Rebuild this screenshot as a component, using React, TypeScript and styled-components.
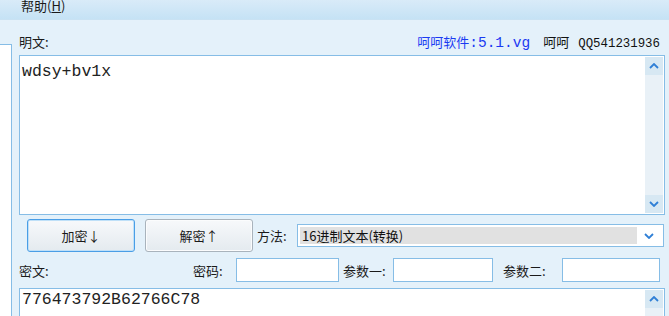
import React from 'react';
import styled, { createGlobalStyle } from 'styled-components';

const cjk = `"Noto Sans CJK SC", "Liberation Sans", sans-serif`;
const mono = `"Liberation Mono", "Noto Sans CJK SC", monospace`;
const line = '#86bde6';

const GlobalStyle = createGlobalStyle`
    html, body {
        margin: 0;
        padding: 0;
        background: #e4f1fa;
        overflow: hidden;
    }
    * { box-sizing: border-box; }
`;

const Window = styled.div`
    width: 669px;
    height: 316px;
    display: flex;
    flex-direction: column;
    overflow: hidden;
    font-family: ${cjk};
    font-size: 13px;
    color: #111;
`;

const MenuBar = styled.div`
    height: 20px;
    flex-shrink: 0;
    background: linear-gradient(#d9ebf8, #c5e2f5);
    border-bottom: 1px solid #c9e2f3;
    display: flex;
    align-items: flex-end;
    padding: 0 0 7px 21px;
    overflow: hidden;
`;

const MenuItem = styled.span`
    font-size: 13px;
    line-height: 13px;
    color: #1a1a1a;
`;

const Body = styled.div`
    flex: 1;
    display: flex;
    min-height: 0;
`;

const SidePanel = styled.div`
    width: 12px;
    margin-top: 24px;
    background: #fff;
    border-top: 1px solid ${line};
    border-right: 1px solid ${line};
    flex-shrink: 0;
`;

const Main = styled.div`
    flex: 1;
    display: flex;
    flex-direction: column;
    padding: 10px 4px 0 7px;
    min-width: 0;
    & > * {
        flex-shrink: 0;
    }
`;

const HeaderRow = styled.div`
    height: 25px;
    display: flex;
    align-items: center;
    justify-content: space-between;
    padding-bottom: 2px;
`;

const Label = styled.span<{ $w?: number }>`
    font-size: 13px;
    color: #1a1a1a;
    white-space: nowrap;
    ${p => (p.$w ? `width: ${p.$w}px; flex-shrink: 0;` : '')}
`;

const Info = styled.div`
    display: flex;
    align-items: center;
    padding-right: 5px;
    font-size: 13px;
`;

const Version = styled.span`
    color: #1a3af2;
    font-size: 13px;
    margin-right: 13px;
    & b {
        font-family: ${mono};
        font-weight: normal;
        font-size: 14.5px;
    }
`;

const Author = styled.span`
    color: #111;
    & b {
        font-family: ${mono};
        font-weight: normal;
        font-size: 12.4px;
        margin-left: 9px;
    }
`;

const TextBox = styled.div<{ $h: number }>`
    height: ${p => p.$h}px;
    background: #fff;
    border: 1px solid ${line};
    display: flex;
`;

const TextContent = styled.div<{ $pt: number }>`
    flex: 1;
    padding: ${p => p.$pt}px 2px;
    font-family: ${mono};
    font-size: 16.5px;
    line-height: 18px;
    color: #222;
`;

const ScrollBar = styled.div`
    width: 18px;
    margin: 1px 1px 1px 0;
    background: #e9f1f7;
    display: flex;
    flex-direction: column;
    justify-content: space-between;
`;

const ScrollBtn = styled.div`
    height: 18px;
    background: #d7e8f3;
    display: flex;
    align-items: center;
    justify-content: center;
`;

const Chevron = ({ up }: { up?: boolean }) => (
    <svg width="10" height="6" viewBox="0 0 10 6">
        <path
            d={up ? 'M1 5 L5 1 L9 5' : 'M1 1 L5 5 L9 1'}
            fill="none"
            stroke="#2f7fd6"
            strokeWidth="1.8"
        />
    </svg>
);

const ButtonRow = styled.div`
    height: 41px;
    display: flex;
    align-items: center;
    padding-left: 8px;
`;

const Button = styled.div<{ $focused?: boolean; $mr: number }>`
    width: 108px;
    height: 33px;
    margin-right: ${p => p.$mr}px;
    border-radius: 3px;
    border: 1px solid ${p => (p.$focused ? '#4a9ee6' : '#a9b3bc')};
    box-shadow: ${p => (p.$focused ? 'inset 0 0 0 1px #bfe0f8' : 'inset 0 0 0 1px #fbfcfd')};
    background: linear-gradient(#f7f9fb, #e4eaef);
    display: flex;
    align-items: center;
    justify-content: center;
    font-size: 13px;
    color: #1a1a1a;
    flex-shrink: 0;
`;

const Select = styled.div`
    flex: 1;
    height: 23px;
    margin-right: 1px;
    background: #fff;
    border: 1px solid ${line};
    display: flex;
    align-items: center;
    padding: 2px;
`;

const SelectValue = styled.div`
    flex: 1;
    height: 17px;
    background: #e1e1e1;
    font-size: 13px;
    line-height: 17px;
    padding-left: 2px;
    color: #111;
`;

const SelectArrow = styled.div`
    width: 24px;
    display: flex;
    justify-content: center;
`;

const ParamRow = styled.div`
    height: 32px;
    display: flex;
    align-items: center;
    padding-bottom: 4px;
    padding-right: 5px;
`;

const Input = styled.div<{ $w: number }>`
    width: ${p => p.$w}px;
    height: 24px;
    background: #fff;
    border: 1px solid ${line};
    flex-shrink: 0;
`;

const Spacer = styled.div`
    flex: 1;
`;

const Gap = styled.div<{ $w: number }>`
    width: ${p => p.$w}px;
    flex-shrink: 0;
`;

export default function App() {
    return (
        <Window>
            <GlobalStyle />
            <MenuBar>
                <MenuItem>帮助(<u>H</u>)</MenuItem>
            </MenuBar>
            <Body>
                <SidePanel />
                <Main>
                    <HeaderRow>
                        <Label>明文:</Label>
                        <Info>
                            <Version>呵呵软件<b>:5.1.vg</b></Version>
                            <Author>呵呵<b>QQ541231936</b></Author>
                        </Info>
                    </HeaderRow>
                    <TextBox $h={160}>
                        <TextContent $pt={7}>wdsy+bv1x</TextContent>
                        <ScrollBar>
                            <ScrollBtn><Chevron up /></ScrollBtn>
                            <ScrollBtn><Chevron /></ScrollBtn>
                        </ScrollBar>
                    </TextBox>
                    <ButtonRow>
                        <Button $focused $mr={10}>加密↓</Button>
                        <Button $mr={4}>解密↑</Button>
                        <Label $w={40}>方法:</Label>
                        <Select>
                            <SelectValue>16进制文本(转换)</SelectValue>
                            <SelectArrow><Chevron /></SelectArrow>
                        </Select>
                    </ButtonRow>
                    <ParamRow>
                        <Label>密文:</Label>
                        <Spacer />
                        <Label $w={43}>密码:</Label>
                        <Input $w={103} />
                        <Gap $w={4} />
                        <Label $w={50}>参数一:</Label>
                        <Input $w={100} />
                        <Gap $w={10} />
                        <Label $w={59}>参数二:</Label>
                        <Input $w={98} />
                    </ParamRow>
                    <TextBox $h={60}>
                        <TextContent $pt={2}>776473792B62766C78</TextContent>
                        <ScrollBar>
                            <ScrollBtn><Chevron up /></ScrollBtn>
                        </ScrollBar>
                    </TextBox>
                </Main>
            </Body>
        </Window>
    );
}
